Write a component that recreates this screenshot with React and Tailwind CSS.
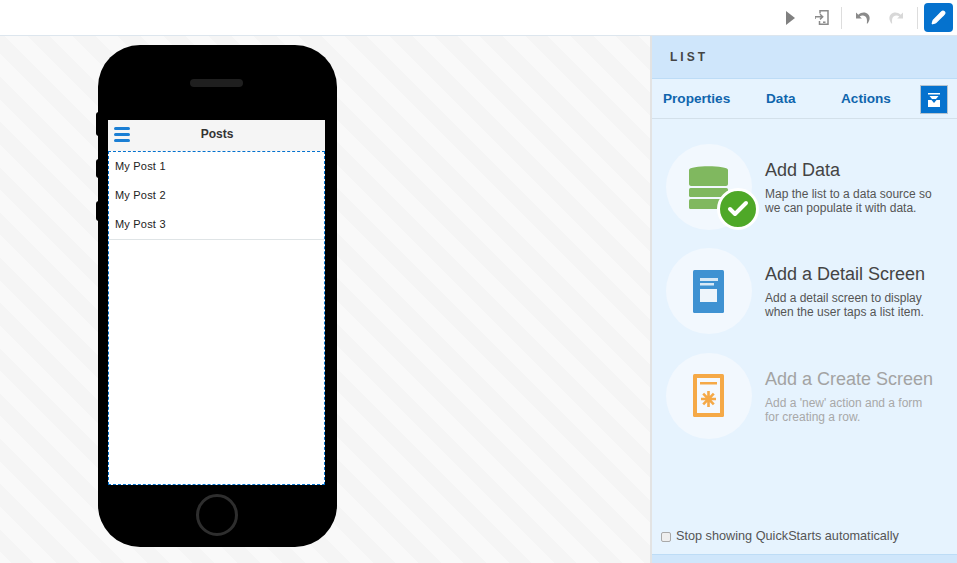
import React from 'react';
import { Pencil, Check } from 'lucide-react';

function PlayIcon() {
  return (
    <svg width="9" height="14" viewBox="0 0 9 14" fill="#808080">
      <path d="M0 0l9 7-9 7z" />
    </svg>
  );
}

function DeployIcon() {
  return (
    <svg width="14" height="15" viewBox="0 0 14 15" fill="none" stroke="#8a8a8a" strokeWidth="1.5">
      <path d="M5 3.5V.8h8v13.4H4.5V11" />
      <path d="M0 9V6.8h7.5M5 4.2l2.7 2.6L5 9.4" />
      <path d="M8 12.2h2.5" />
    </svg>
  );
}

function UndoIcon({ color, flip }) {
  return (
    <svg width="14" height="12" viewBox="0 0 14 12" fill={color} className={flip ? '-scale-x-100' : ''}>
      <path d="M0 .6v5.9h5.9L3.7 4.5C5.2 3.3 7.7 3.2 9.4 4.5c1.4 1.1 1.9 3.2 1.4 6.9h.8C13.6 8.6 14.7 5 12.2 2.4 9.6-.1 5.5-.2 2.3 2.8z" />
    </svg>
  );
}

function DatabaseIcon() {
  return (
    <svg width="66" height="68" viewBox="0 0 66 68" className="absolute left-[23px] top-[21px]">
      <path d="M0 5C0 0 39 0 39 5v14c0 1-1 2-2 2H2c-1 0-2-1-2-2z" fill="#80b85f" />
      <rect x="0" y="23" width="39" height="9" rx="1.5" fill="#80b85f" />
      <rect x="0" y="34" width="39" height="10" rx="1.5" fill="#80b85f" />
    </svg>
  );
}

function DetailIcon() {
  return (
    <svg width="31" height="43" viewBox="0 0 31 43" className="absolute left-[27px] top-[22px]">
      <rect width="31" height="43" rx="1.5" fill="#3f92d2" />
      <rect x="7" y="8" width="18" height="3" fill="#d8e9f6" />
      <rect x="7" y="13" width="14" height="2.5" fill="#d8e9f6" />
      <rect x="7" y="19" width="17" height="13" fill="#eef5fb" />
    </svg>
  );
}

function CreateIcon() {
  return (
    <svg width="31" height="43" viewBox="0 0 31 43" className="absolute left-[27px] top-[21px]">
      <rect width="31" height="43" rx="1.5" fill="#f5a947" />
      <rect x="4" y="4" width="23" height="35" fill="#f4f9fe" />
      <rect x="7" y="8" width="17" height="2.5" fill="#f5a947" />
      <path d="M15.5 17v16M8 25h15M10.2 19.7l10.6 10.6M20.8 19.7L10.2 30.3" stroke="#f5a947" strokeWidth="2.6" />
    </svg>
  );
}

const steps = [
  { title: 'Add Data', text: ['Map the list to a data source so', 'we can populate it with data.'], icon: <DatabaseIcon />, done: true },
  { title: 'Add a Detail Screen', text: ['Add a detail screen to display', 'when the user taps a list item.'], icon: <DetailIcon /> },
  { title: 'Add a Create Screen', text: ["Add a 'new' action and a form", 'for creating a row.'], icon: <CreateIcon />, muted: true },
];

function Step({ step }) {
  return (
    <div className="flex h-[86px] items-center">
      <div className="relative h-[86px] w-[86px] shrink-0 rounded-full bg-[#f2f8fe]">
        {step.icon}
        {step.done && (
          <div className="absolute left-[51px] top-[44px] flex h-[42px] w-[42px] items-center justify-center rounded-full border-[3px] border-white bg-[#4fa828]">
            <Check size={24} color="#ffffff" strokeWidth={4} />
          </div>
        )}
      </div>
      <div className="ml-[13px]">
        <div className={`text-[18px] leading-[22px] ${step.muted ? 'text-[#a3a3a3]' : 'text-[#444444]'}`}>{step.title}</div>
        <div className={`mt-[6px] text-[12px] leading-[14px] ${step.muted ? 'text-[#a8a8a8]' : 'text-[#555555]'}`}>
          {step.text.map((line) => (
            <div key={line}>{line}</div>
          ))}
        </div>
      </div>
    </div>
  );
}

function Phone() {
  return (
    <div className="relative ml-[98px] mt-[9px] flex h-[502px] w-[239px] flex-col items-start rounded-[42px] bg-black">
      <div className="absolute left-[-2px] top-[67px] h-[24px] w-[3px] rounded-l-sm bg-black" />
      <div className="absolute left-[-2px] top-[114px] h-[19px] w-[3px] rounded-l-sm bg-black" />
      <div className="absolute left-[-2px] top-[156px] h-[20px] w-[3px] rounded-l-sm bg-black" />
      <div className="ml-[92px] mt-[34px] h-[8px] w-[53px] rounded-full bg-[#1f1f1f]" />
      <div className="ml-[10px] mt-[33px] flex h-[365px] w-[217px] flex-col bg-white">
        <div className="relative flex h-[31px] shrink-0 items-center justify-center bg-[#f5f5f5] pb-[4px] pl-[1px] text-[12px] font-bold text-[#333333]">
          <div className="absolute left-[6px] top-[7px] flex w-[16px] flex-col gap-[3px]">
            <div className="h-[3px] rounded-full bg-[#1b7fd4]" />
            <div className="h-[3px] rounded-full bg-[#1b7fd4]" />
            <div className="h-[3px] rounded-full bg-[#1b7fd4]" />
          </div>
          Posts
        </div>
        <div className="flex-1 border border-dashed border-[#0572ce]">
          <div className="border-b border-[#dfe4e6] pl-[6px] text-[11px] tracking-[0.2px] text-[#222222]">
            <div className="flex h-[29px] items-center">My Post 1</div>
            <div className="flex h-[29px] items-center">My Post 2</div>
            <div className="flex h-[29px] items-center">My Post 3</div>
          </div>
        </div>
      </div>
      <div className="ml-[98px] mt-[9px] h-[42px] w-[42px] rounded-full border-[3px] border-[#2e2e2e]" />
    </div>
  );
}

export default function App() {
  return (
    <div className="flex h-[563px] w-[957px] flex-col overflow-hidden bg-white font-['Liberation_Sans',Arial,sans-serif]">
      <div className="flex h-[36px] shrink-0 items-center justify-end border-b border-[#dde6ee] pr-[4px]">
        <div className="mr-[20px] flex"><PlayIcon /></div>
        <div className="mr-[12px] flex"><DeployIcon /></div>
        <div className="mr-[14px] h-[22px] w-px bg-[#dddddd]" />
        <div className="mr-[19px] flex"><UndoIcon color="#8a8a8a" /></div>
        <div className="mr-[14px] flex"><UndoIcon color="#d8d8d8" flip /></div>
        <div className="mr-[6px] h-[22px] w-px bg-[#dddddd]" />
        <div className="flex h-[29px] w-[29px] items-center justify-center rounded-sm bg-[#0572ce]">
          <Pencil size={15} color="#ffffff" fill="#ffffff" />
        </div>
      </div>
      <div className="flex min-h-0 flex-1">
        <div className="w-[650px] shrink-0 bg-[repeating-linear-gradient(45deg,#f9f9f9_0px,#f9f9f9_8px,#f5f5f5_8px,#f5f5f5_24px,#f9f9f9_24px,#f9f9f9_32px)]">
          <Phone />
        </div>
        <div className="flex flex-1 flex-col border-l-2 border-[#e3e3e3] bg-[#e6f3fe]">
          <div className="flex h-[43px] shrink-0 items-center border-b border-[#bddcf6] bg-[#cfe6fb] pl-[18px] text-[12px] font-bold tracking-[3px] text-[#444444]">
            LIST
          </div>
          <div className="flex h-[40px] shrink-0 items-center border-b border-[#d3e0ea] pl-[11px] pt-[2px] text-[13.6px] font-bold text-[#0f65ad]">
            <span className="w-[103px]">Properties</span>
            <span className="w-[75px]">Data</span>
            <span className="w-[79px]">Actions</span>
            <div className="flex h-[29px] w-[28px] items-center justify-center border border-[#b5c3cf] bg-[#0572ce]">
              <svg width="12" height="14" viewBox="0 0 12 14" fill="#ffffff">
                <path d="M0 0h12v1.5H0zM1.5 3h9L8 6H4zM0 7h3.5L6 10l2.5-3H12v7H0z" />
              </svg>
            </div>
          </div>
          <div className="flex flex-1 flex-col gap-[18px] pl-[14px] pt-[25px] [&>*:last-child]:mt-[1px]">
            {steps.map((step) => (
              <Step key={step.title} step={step} />
            ))}
          </div>
          <label className="flex h-[36px] shrink-0 items-center pl-[9px] pt-[2px] text-[12.7px] text-[#555555]">
            <input type="checkbox" className="mr-[5px] h-[10px] w-[10px] appearance-none rounded-[2px] border border-[#a9a9a9] bg-[#eeeeee]" />
            Stop showing QuickStarts automatically
          </label>
          <div className="h-[9px] shrink-0 border-t border-[#bddcf6] bg-[#cfe6fb]" />
        </div>
      </div>
    </div>
  );
}
